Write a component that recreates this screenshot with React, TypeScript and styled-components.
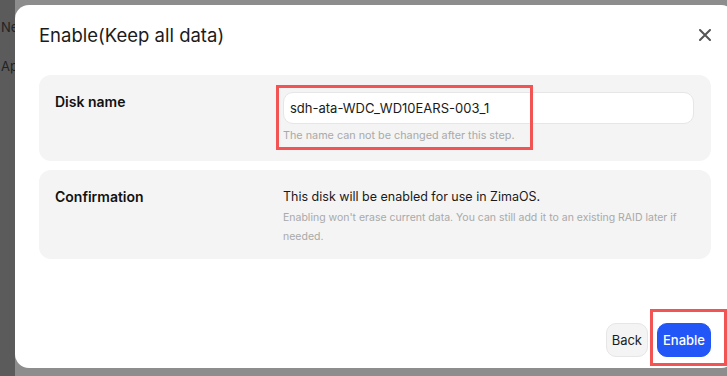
import React from "react";
import styled, { createGlobalStyle } from "styled-components";

const GlobalStyle = createGlobalStyle`
  html, body {
    margin: 0;
    padding: 0;
    overflow: hidden;
  }
  body {
    font-family: Inter, "Liberation Sans", Arial, sans-serif;
    -webkit-font-smoothing: antialiased;
  }
`;

const Page = styled.div`
  display: flex;
  width: 727px;
  height: 376px;
  overflow: hidden;
  background: #8d8d8d;
`;

const SideStrip = styled.div`
  flex: 0 0 15px;
  background: #5b5b5b;
  overflow: hidden;
  white-space: nowrap;
  padding-top: 18px;
  display: flex;
  flex-direction: column;
  gap: 21px;
`;

const SideItem = styled.span`
  font-size: 13px;
  line-height: 18px;
  color: #232323;
  margin-left: 1px;
`;

const Stage = styled.div`
  flex: 1;
  padding-top: 5px;
  overflow: hidden;
`;

const Modal = styled.div`
  width: 720px;
  height: 363px;
  background: #fff;
  border-radius: 14px;
  display: flex;
  flex-direction: column;
  padding: 0 24px 11px;
  box-sizing: border-box;
`;

const Header = styled.div`
  display: flex;
  align-items: center;
  justify-content: space-between;
  height: 58px;
  padding-top: 1px;
  box-sizing: border-box;
`;

const Title = styled.h2`
  margin: 0;
  font-size: 18.5px;
  font-weight: 400;
  color: #1b1b1b;
`;

const CloseButton = styled.button`
  border: 0;
  background: none;
  padding: 0;
  margin-right: -2px;
  width: 16px;
  height: 16px;
  display: flex;
  align-items: center;
  justify-content: center;
  color: #555;
`;

const Sections = styled.div`
  display: flex;
  flex-direction: column;
  gap: 9px;
  margin-top: 12px;
`;

const Card = styled.div<{ $bottom: number }>`
  display: grid;
  grid-template-columns: 228px 1fr;
  background: #f4f4f4;
  border-radius: 12px;
  padding: 17px 17px ${(p) => p.$bottom}px 16px;
`;

const Label = styled.div`
  font-size: 14px;
  line-height: 20px;
  font-weight: 600;
  color: #111;
`;

const Field = styled.div`
  position: relative;
  display: flex;
  flex-direction: column;
`;

const Input = styled.input`
  height: 32px;
  box-sizing: border-box;
  border: 1px solid #e6e6e6;
  border-radius: 10px;
  background: #fff;
  padding: 0 6px;
  font-family: inherit;
  font-size: 13px;
  color: #1a1a1a;
  outline: none;
`;

const Hint = styled.div`
  margin-top: 3px;
  font-size: 10.8px;
  line-height: 18px;
  color: #a9a9a9;
`;

const Body = styled.div`
  font-size: 12.5px;
  line-height: 20px;
  color: #1a1a1a;
`;

const Note = styled.div`
  margin-top: 1px;
  font-size: 10.5px;
  line-height: 19px;
  color: #a9a9a9;
  max-width: 412px;
`;

const Highlight = styled.div<{ $l: number; $t: number; $w: number; $h: number }>`
  position: absolute;
  left: ${(p) => p.$l}px;
  top: ${(p) => p.$t}px;
  width: ${(p) => p.$w}px;
  height: ${(p) => p.$h}px;
  border: 3px solid #f25353;
  box-sizing: border-box;
  pointer-events: none;
`;

const Footer = styled.div`
  margin-top: auto;
  display: flex;
  justify-content: flex-end;
  gap: 9px;
`;

const ButtonWrap = styled.div`
  position: relative;
`;

const Button = styled.button<{ $primary?: boolean }>`
  height: 34px;
  padding: 0 ${(p) => (p.$primary ? 5 : 5)}px;
  border-radius: 10px;
  font-family: inherit;
  font-size: 13px;
  border: 1px solid ${(p) => (p.$primary ? "#2356f6" : "#e6e6e6")};
  background: ${(p) => (p.$primary ? "#2356f6" : "#f4f4f4")};
  color: ${(p) => (p.$primary ? "#fff" : "#1d1d1d")};
  font-weight: ${(p) => (p.$primary ? 500 : 400)};
`;

const CloseIcon = () => (
  <svg width="12" height="12" viewBox="0 0 12 12" fill="none">
    <path d="M1 1L11 11M11 1L1 11" stroke="currentColor" strokeWidth="2" strokeLinecap="round" />
  </svg>
);

export default function App() {
  return (
    <>
      <GlobalStyle />
      <Page>
        <SideStrip>
          <SideItem>New</SideItem>
          <SideItem>Apps</SideItem>
        </SideStrip>
        <Stage>
          <Modal>
            <Header>
              <Title>Enable(Keep all data)</Title>
              <CloseButton aria-label="Close">
                <CloseIcon />
              </CloseButton>
            </Header>
            <Sections>
              <Card $bottom={16}>
                <Label>Disk name</Label>
                <Field>
                  <Input readOnly value="sdh-ata-WDC_WD10EARS-003_1" />
                  <Hint>The name can not be changed after this step.</Hint>
                  <Highlight $l={-7} $t={-7} $w={257} $h={65} />
                </Field>
              </Card>
              <Card $bottom={13}>
                <Label>Confirmation</Label>
                <div>
                  <Body>This disk will be enabled for use in ZimaOS.</Body>
                  <Note>
                    Enabling won't erase current data. You can still add it to an existing RAID later if
                    needed.
                  </Note>
                </div>
              </Card>
            </Sections>
            <Footer>
              <Button>Back</Button>
              <ButtonWrap>
                <Button $primary>Enable</Button>
                <Highlight $l={-7} $t={-14} $w={77} $h={57} />
              </ButtonWrap>
            </Footer>
          </Modal>
        </Stage>
      </Page>
    </>
  );
}
